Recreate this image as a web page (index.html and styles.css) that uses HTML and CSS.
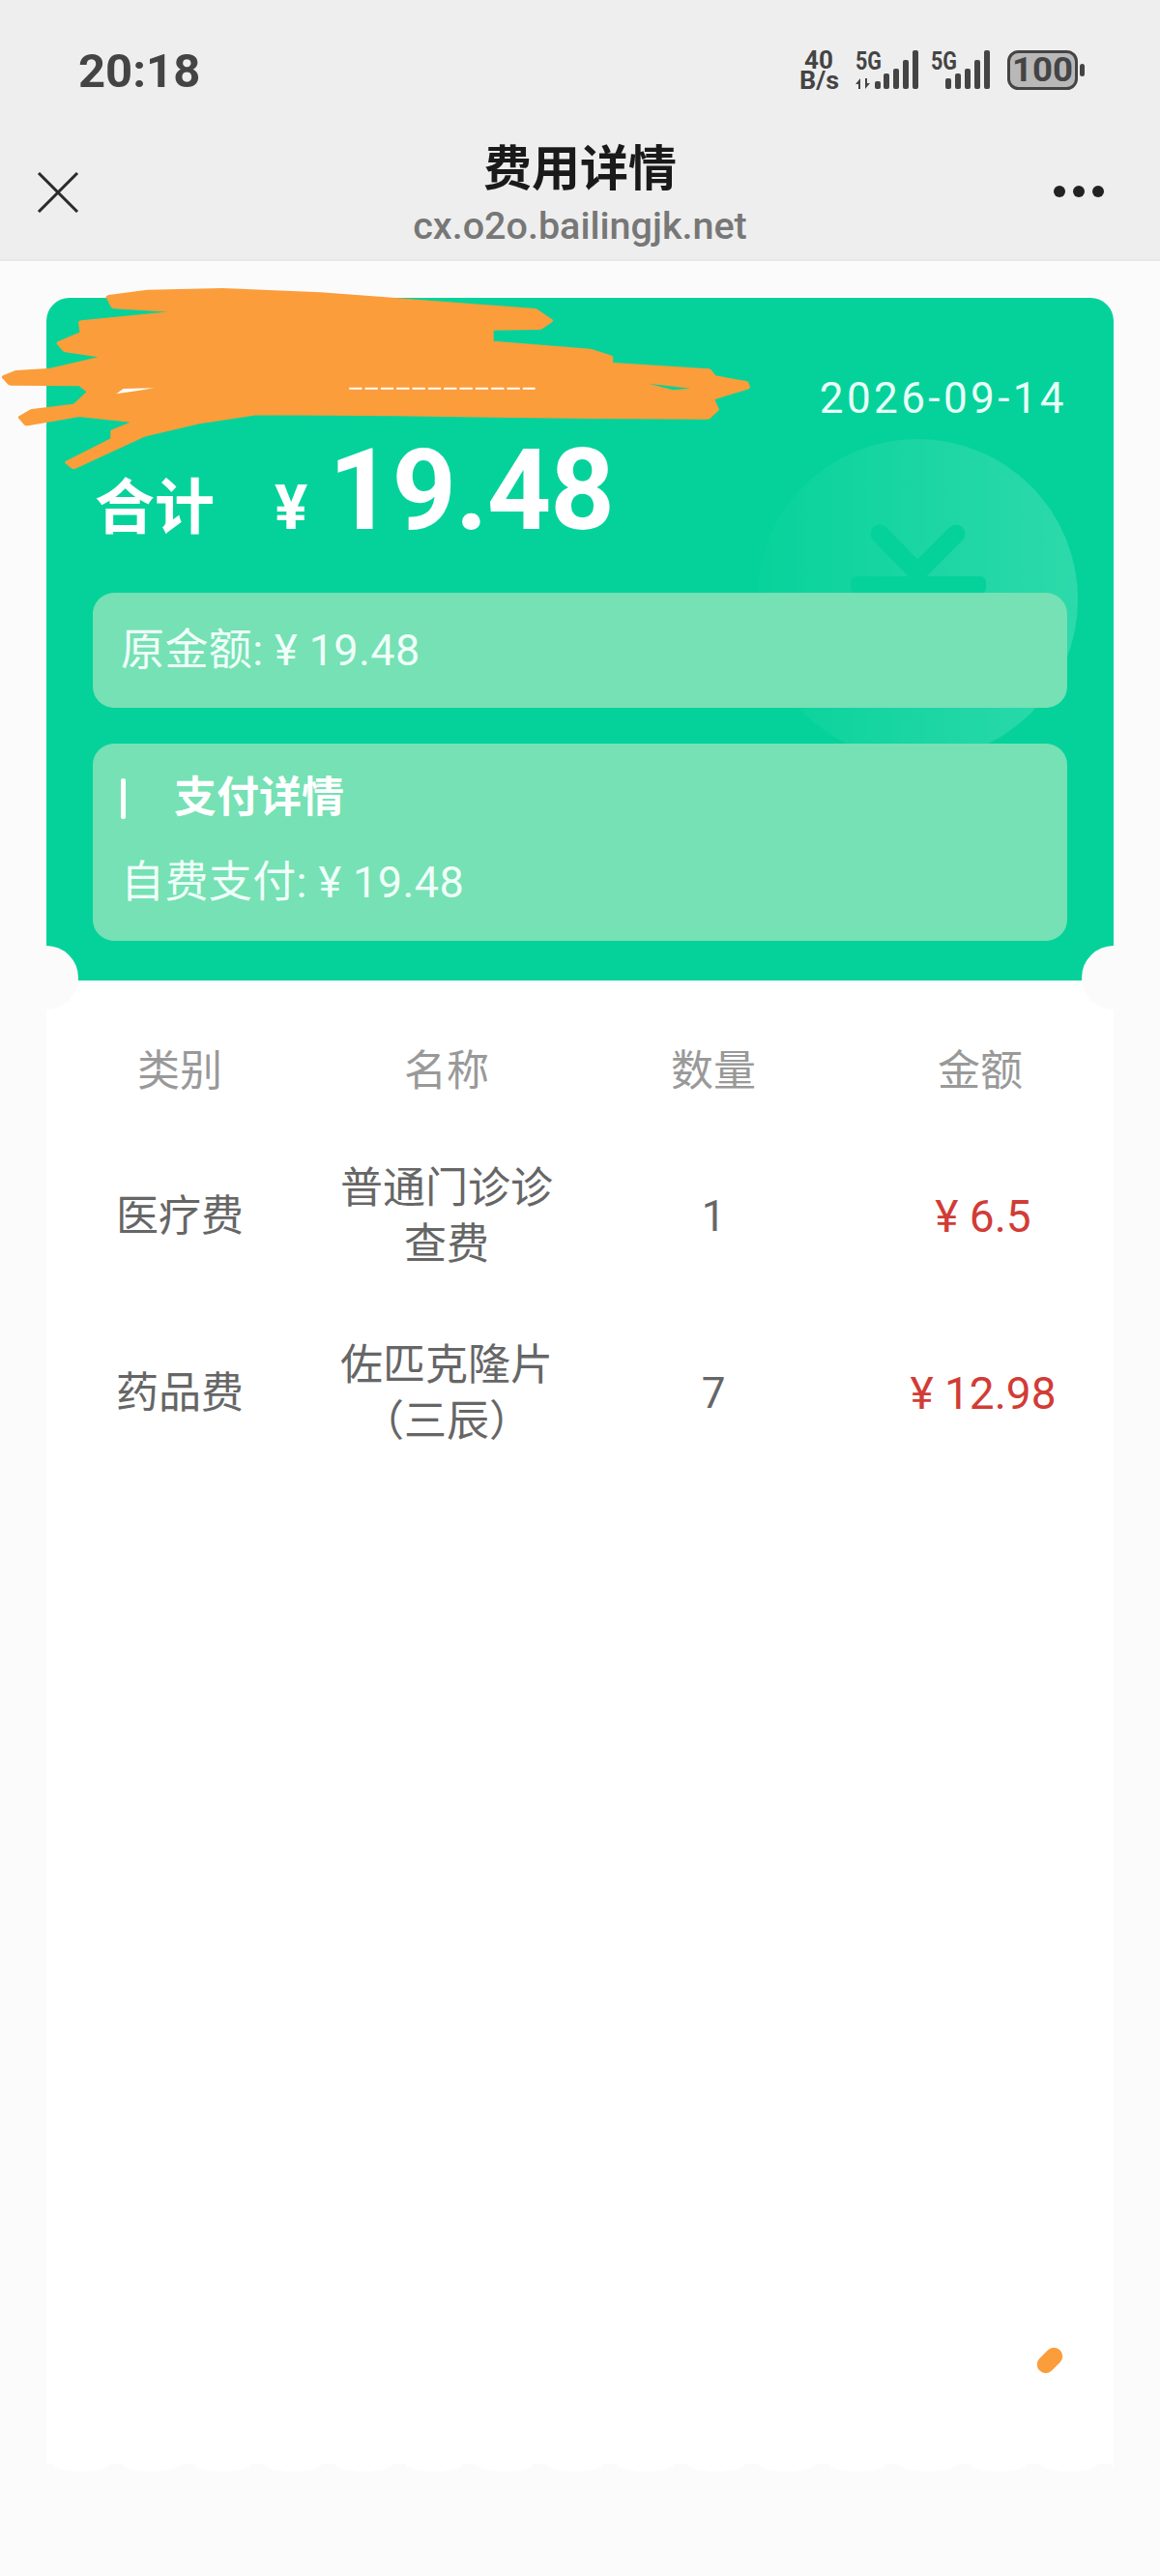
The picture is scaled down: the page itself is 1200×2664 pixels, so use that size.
FILE: index.html
```html
<!DOCTYPE html>
<html lang="zh-CN">
<head>
  <meta charset="UTF-8" />
  <meta name="viewport" content="width=device-width, initial-scale=1.0"/>
  <title>费用详情</title>
  <link rel="stylesheet" href="styles.css">
</head>
<body>

  <!-- Status bar + title bar -->
  <header class="top">
    <div class="status">
      <span class="time">20:18</span>
      <svg class="status-icons" viewBox="827 48 296 50" width="296" height="50">
        <g fill="#444">
          <text class="speed" x="847" y="72" text-anchor="middle">40</text>
          <text class="speed" x="827" y="93" textLength="41" lengthAdjust="spacingAndGlyphs">B/s</text>
          <text class="net" x="885" y="73" textLength="27" lengthAdjust="spacingAndGlyphs">5G</text>
          <path d="M890 82l-5 6h3v5h2zM895 93l5-6h-3v-5h-2z"/>
          <rect x="905" y="85" width="6" height="8" rx="2"/>
          <rect x="914" y="77" width="6" height="16" rx="2"/>
          <rect x="924" y="72" width="6" height="21" rx="2"/>
          <rect x="934" y="63" width="6" height="30" rx="2"/>
          <rect x="944" y="53" width="6" height="40" rx="2"/>
          <text class="net" x="963" y="73" textLength="27" lengthAdjust="spacingAndGlyphs">5G</text>
          <rect x="978" y="82" width="6" height="11" rx="2"/>
          <rect x="988" y="77" width="6" height="16" rx="2"/>
          <rect x="998" y="72" width="6" height="21" rx="2"/>
          <rect x="1008" y="63" width="6" height="30" rx="2"/>
          <rect x="1018" y="53" width="6" height="40" rx="2"/>
          <rect x="1043.5" y="54.5" width="70" height="38" rx="10" fill="#b8b8b8" stroke="#444" stroke-width="3"/>
          <text class="batt" x="1047" y="85" textLength="63" lengthAdjust="spacingAndGlyphs">100</text>
          <rect x="1117" y="67" width="5" height="13" rx="2.5"/>
        </g>
      </svg>
    </div>
    <div class="nav">
      <svg class="close" viewBox="0 0 44 42" width="44" height="42">
        <path d="M2 1l40 40M42 1L2 41" stroke="#2a2a2a" stroke-width="3" fill="none"/>
      </svg>
      <div class="nav-title">
        <h1>费用详情</h1>
        <div class="url">cx.o2o.bailingjk.net</div>
      </div>
      <div class="dots"><i></i><i></i><i></i></div>
    </div>
  </header>

  <div class="card">
    <div class="summary">
      <!-- yen watermark -->
      <div class="coin">
        <svg viewBox="0 0 332 160" width="332" height="160">
          <path d="M127 98l39 40 40-40" stroke="#05d29a" stroke-width="19" stroke-linecap="round" fill="none"/>
          <rect x="97" y="142" width="140" height="18" rx="6" fill="#05d29a"/>
        </svg>
      </div>

      <div class="date">2026-09-14</div>
      <div class="total">
        <span class="total-label">合计</span>
        <span class="total-yen">¥</span>
        <span class="total-num">19.48</span>
      </div>
      <div class="panel panel-orig">原金额: ¥ 19.48</div>
      <div class="panel panel-pay">
        <div class="pay-title">支付详情</div>
        <div>自费支付: ¥ 19.48</div>
      </div>
    </div>

    <span class="notch notch-left"></span>
    <span class="notch notch-right"></span>

    <div class="list">
      <div class="row row-head">
        <div>类别</div>
        <div>名称</div>
        <div>数量</div>
        <div>金额</div>
      </div>
      <div class="row">
        <div>医疗费</div>
        <div class="name">普通门诊诊查费</div>
        <div>1</div>
        <div class="money">¥ 6.5</div>
      </div>
      <div class="row">
        <div>药品费</div>
        <div class="name">佐匹克隆片（三辰）</div>
        <div>7</div>
        <div class="money">¥ 12.98</div>
      </div>
    </div>
    <div class="card-edge"></div>
  </div>

  <!-- scribbled out over the patient name -->
  <svg class="scribble" viewBox="0 0 1568 900" width="800" height="300" preserveAspectRatio="none">
    <path fill="#fb9d3b" stroke="#fb9d3b" stroke-width="14" stroke-linejoin="round" d="M222 82 300 66 450 61 650 74 800 91 1084 124 1114 155 1094 176 994 178 994 224 1196 249 1236 269 1236 291 1436 311 1446 331 1511 349 1514 361 1441 396 1451 430 1434 454 1200 452 800 444 520 441 400 469 290 509 150 608 139 595 231 524 231 499 284 466 160 446 55 474 44 455 66 436 154 419 184 375 164 351 22 349 11 330 34 316 104 309 224 266 134 246 122 225 169 194 166 161 394 126 232 111Z"/>
    <path fill="none" stroke="#fff" stroke-width="6" stroke-dasharray="26 6" d="M708 365H1085"/>
    <path fill="#fff" d="M236 382 250 366 312 364 280 372Z"/>
    <path fill="#05d29a" d="M1315 350 1400 365 1365 370Z"/>
  </svg>
  <span class="dab"></span>

</body>
</html>
```

FILE: styles.css
```css
* {
  box-sizing: border-box;
  padding: 0;
  margin: 0;
}

body {
  position: relative;
  width: 1200px;
  height: 2664px;
  overflow: hidden;
  background: #fbfbfb;
  color: #666;
  font-family: Roboto, 'Noto Sans CJK SC', sans-serif;
  font-size: 44px;
}

/* top bars */
.top {
  background: #eeeeee;
  border-bottom: 2px solid #e8e8e8;
}

.status {
  height: 144px;
  display: flex;
  justify-content: space-between;
  align-items: center;
  padding: 0 77px 0 81px;
}

.time {
  margin-top: 2px;
  font-size: 49px;
  font-weight: 700;
  color: #444;
}

.speed {
  font: 700 26px Roboto, sans-serif;
}

.net {
  font: 700 26px Roboto, sans-serif;
}

.batt {
  font: 700 35px Roboto, sans-serif;
}

.nav {
  height: 124px;
  display: grid;
  grid-template-columns: 1fr auto 1fr;
}

.close {
  margin: 34px 0 0 38px;
}

.nav-title {
  padding-top: 1px;
  text-align: center;
}

h1 {
  font-size: 50px;
  line-height: 60px;
  font-weight: 700;
  color: #1a1a1a;
}

.url {
  font-size: 39.5px;
  line-height: 44px;
  margin-top: 7px;
  color: #777;
  font-weight: 500;
}

.dots {
  display: flex;
  justify-content: flex-end;
  gap: 8px;
  margin: 48px 58px 0 0;
}

.dots i {
  width: 12px;
  height: 12px;
  border-radius: 50%;
  background: #222;
}

/* receipt card */
.card {
  position: relative;
  margin: 38px 48px 0;
}

.summary {
  position: relative;
  height: 706px;
  padding: 74px 48px 0;
  background: #05d29a;
  border-radius: 24px 24px 0 0;
  color: #fff;
  overflow: hidden;
}

.coin {
  position: absolute;
  left: 735px;
  top: 146px;
  width: 332px;
  height: 332px;
  border-radius: 50%;
  background: linear-gradient(to right, rgba(255, 255, 255, 0.01), rgba(255, 255, 255, 0.16));
}

.coin svg {
  display: block;
}

.date {
  position: relative;
  text-align: right;
  line-height: 60px;
  letter-spacing: 3.4px;
  color: #e8fff7;
}

.total {
  position: relative;
  display: flex;
  align-items: baseline;
  height: 158px;
  padding-left: 2px;
}

.total-label {
  font-size: 62px;
  font-weight: 700;
  width: 186px;
}

.total-yen {
  font-size: 64px;
  font-weight: 700;
  width: 56px;
}

.total-num {
  font-size: 116px;
  line-height: 130px;
  font-weight: 700;
  letter-spacing: -1px;
}

.panel {
  position: relative;
  background: #75e1b4;
  border-radius: 22px;
  padding: 0 29px;
  color: #f0fff9;
  font-size: 45px;
  letter-spacing: 0.4px;
}

.panel-orig {
  height: 119px;
  margin-top: 13px;
  line-height: 119px;
}

.panel-pay {
  height: 204px;
  margin-top: 37px;
  padding-top: 26px;
  line-height: 60px;
}

.pay-title {
  position: relative;
  padding-left: 55px;
  margin-bottom: 28px;
  font-size: 44px;
  letter-spacing: 0;
  font-weight: 700;
  color: #fff;
}

.pay-title::before {
  content: "";
  position: absolute;
  left: 0;
  top: 10px;
  width: 5px;
  height: 42px;
  border-radius: 2px;
  background: #fff;
}

.notch {
  position: absolute;
  top: 670px;
  width: 66px;
  height: 66px;
  border-radius: 50%;
  background: #fbfbfb;
}

.notch-left {
  left: -33px;
}

.notch-right {
  right: -33px;
}

/* fee table */
.list {
  height: 1534px;
  background: #fff;
  padding-top: 60px;
}

.row {
  display: grid;
  grid-template-columns: repeat(4, 1fr);
  align-items: center;
  height: 183px;
  line-height: 58px;
  text-align: center;
}

.row-head {
  height: 68px;
  margin-bottom: 24px;
  color: #999;
}

.name {
  width: 224px;
  margin: 0 auto;
}

.money {
  padding-left: 6px;
  color: #d13c36;
  font-size: 46px;
}

.card-edge {
  height: 8px;
  background: radial-gradient(ellipse 30px 8px at 36px 0, #fff 97%, transparent) 0 0 / 73px 8px repeat-x;
}

/* orange marker over the screenshot */
.scribble {
  position: absolute;
  left: 0;
  top: 280px;
}

.dab {
  position: absolute;
  left: 1071px;
  top: 2432px;
  width: 30px;
  height: 18px;
  border-radius: 9px;
  background: #fb9d3b;
  transform: rotate(-45deg);
}
```
